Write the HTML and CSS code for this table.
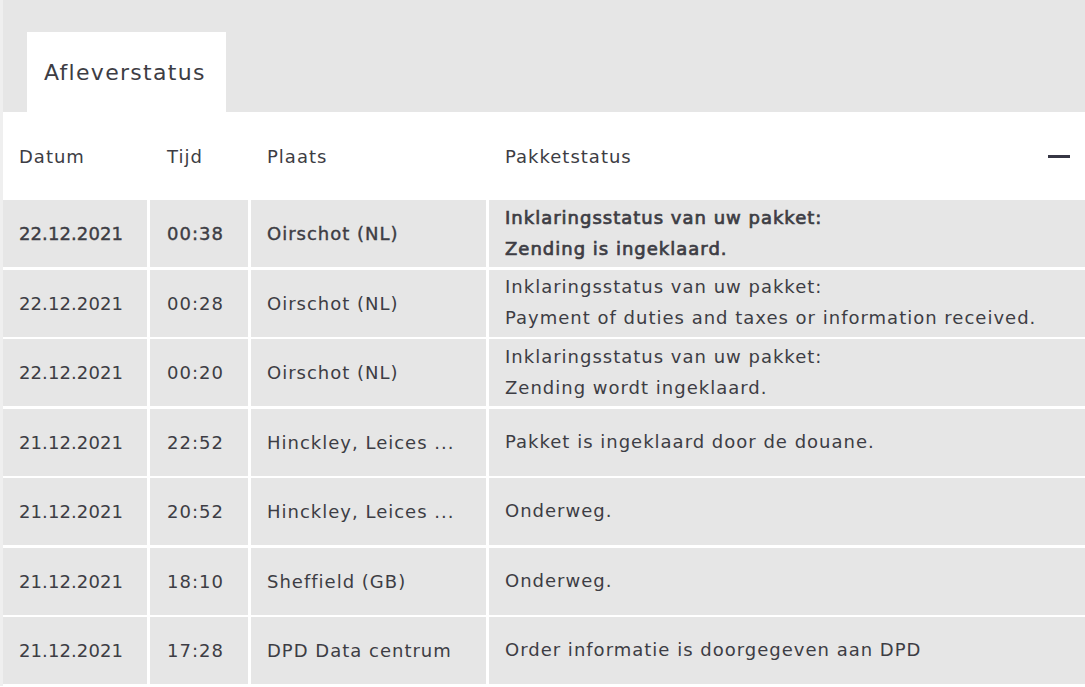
FILE: index.html
```html
<!DOCTYPE html>
<html lang="nl">
<head>
<meta charset="utf-8">
<title>Afleverstatus</title>
<link rel="stylesheet" href="styles.css">
</head>
<body>
<div class="page">
  <div class="tabs">
    <div class="tab">Afleverstatus</div>
  </div>
  <div class="panel">
    <div class="head">
      <div class="hcell">Datum</div>
      <div class="hcell">Tijd</div>
      <div class="hcell">Plaats</div>
      <div class="hcell last">Pakketstatus <span class="minus" aria-label="inklappen"></span></div>
    </div>
    <div class="rows">
      <div class="cell date strong">22.12.2021</div>
      <div class="cell strong">00:38</div>
      <div class="cell strong">Oirschot (NL)</div>
      <div class="cell status bold">Inklaringsstatus van uw pakket:<br>Zending is ingeklaard.</div>

      <div class="cell date">22.12.2021</div>
      <div class="cell">00:28</div>
      <div class="cell">Oirschot (NL)</div>
      <div class="cell status">Inklaringsstatus van uw pakket:<br>Payment of duties and taxes or information received.</div>

      <div class="cell date">22.12.2021</div>
      <div class="cell">00:20</div>
      <div class="cell">Oirschot (NL)</div>
      <div class="cell status">Inklaringsstatus van uw pakket:<br>Zending wordt ingeklaard.</div>

      <div class="cell date">21.12.2021</div>
      <div class="cell">22:52</div>
      <div class="cell">Hinckley, Leices ...</div>
      <div class="cell status">Pakket is ingeklaard door de douane.</div>

      <div class="cell date">21.12.2021</div>
      <div class="cell">20:52</div>
      <div class="cell">Hinckley, Leices ...</div>
      <div class="cell status">Onderweg.</div>

      <div class="cell date">21.12.2021</div>
      <div class="cell">18:10</div>
      <div class="cell">Sheffield (GB)</div>
      <div class="cell status">Onderweg.</div>

      <div class="cell date">21.12.2021</div>
      <div class="cell">17:28</div>
      <div class="cell">DPD Data centrum</div>
      <div class="cell status">Order informatie is doorgegeven aan DPD</div>
    </div>
  </div>
</div>
</body>
</html>
```

FILE: styles.css
```css
html, body {
  margin: 0;
  padding: 0;
  background: #ffffff;
}

body {
  font-family: "DejaVu Sans", "Open Sans", sans-serif;
  color: #3d3d44;
  font-size: 18px;
  letter-spacing: 1px;
}

.page {
  background: #e6e6e6;
  border-left: 3px solid #efefef;
  padding-top: 32px;
  min-height: 653px;
}

.tabs {
  display: flex;
  padding-left: 24px;
}

.tab {
  width: 199px;
  height: 80px;
  background: #ffffff;
  box-sizing: border-box;
  padding-left: 17px;
  display: flex;
  align-items: center;
  font-size: 22px;
  letter-spacing: 1.3px;
}

.panel {
  background: #ffffff;
  padding-bottom: 2px;
}

.head,
.rows {
  display: grid;
  grid-template-columns: 144px 98px 235px 1fr;
  column-gap: 3px;
}

.head {
  height: 88px;
  align-items: center;
}

.hcell {
  padding-left: 16px;
}

.hcell:nth-child(2),
.cell:nth-child(4n+2) {
  padding-left: 17px;
}

.hcell.last {
  display: flex;
  align-items: center;
  justify-content: space-between;
  padding-right: 15px;
}

.minus {
  display: block;
  width: 22px;
  height: 3px;
  background: #363644;
}

.rows {
  grid-auto-rows: 67px;
  row-gap: 2.5px;
}

.cell {
  background: #e6e6e6;
  padding-left: 16px;
  display: flex;
  align-items: center;
  white-space: nowrap;
}

.cell.date {
  letter-spacing: 0.1px;
}

.cell.status {
  line-height: 31px;
  padding-bottom: 2px;
}

.cell.strong {
  -webkit-text-stroke: 0.4px currentColor;
}

.cell.bold {
  -webkit-text-stroke: 0.7px currentColor;
}
```
